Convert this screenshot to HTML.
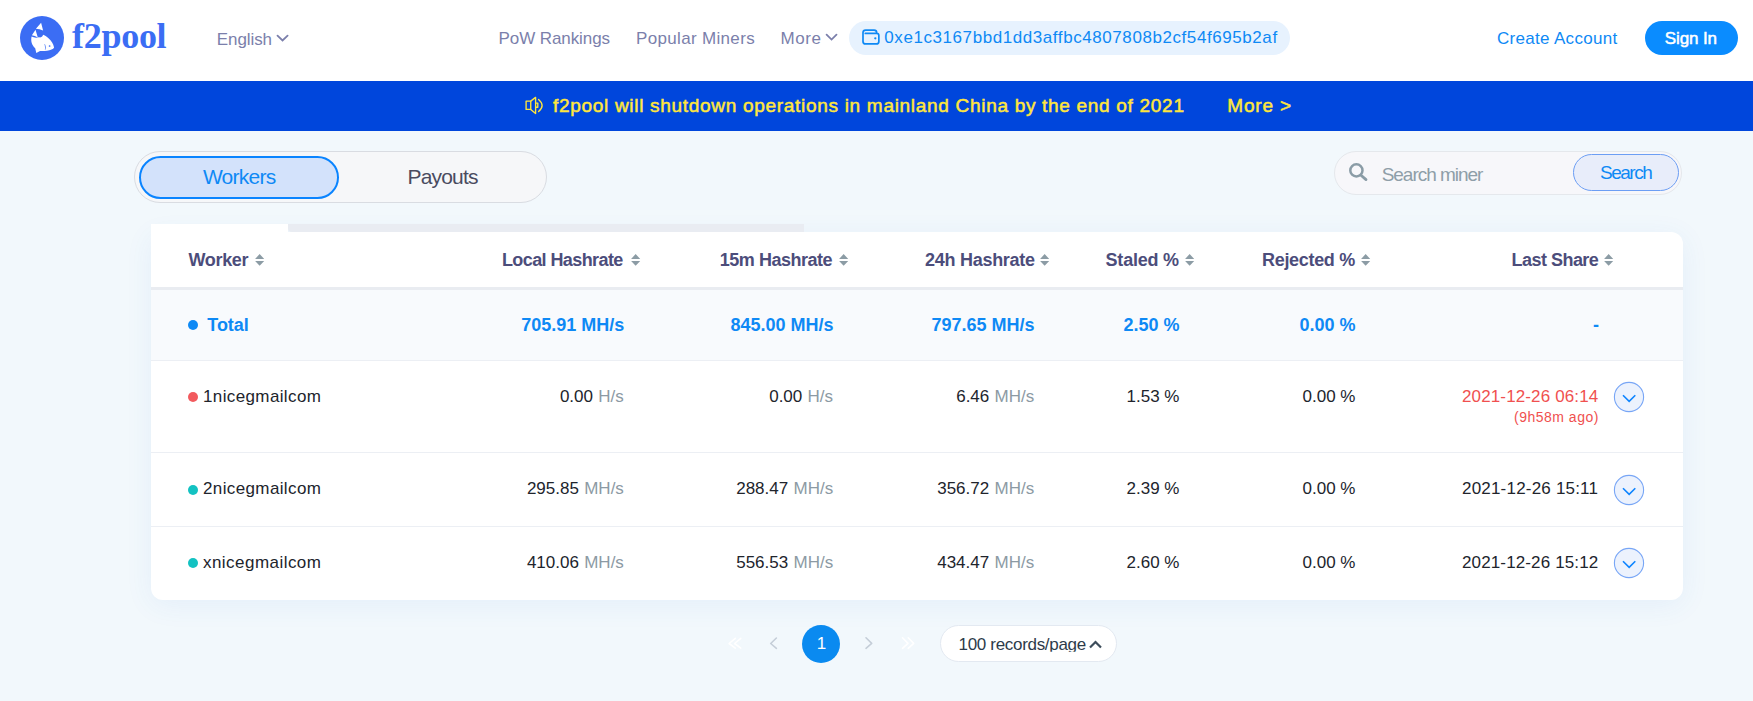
<!DOCTYPE html>
<html><head><meta charset="utf-8"><style>
html,body{margin:0;padding:0;width:1753px;height:701px;overflow:hidden;background:#F2F8FC;}
.r{position:absolute;}
.t{position:absolute;white-space:nowrap;line-height:1;}
</style></head><body>
<div class="r" style="left:0;top:0;width:1753px;height:81px;background:#fff"></div>
<div class="r" style="left:19.5px;top:16px;width:44px;height:44px;border-radius:50%;background:#3B6DF4"></div>
<svg class="r" style="left:19.5px;top:16px" width="44" height="44" viewBox="0 0 44 44">
<path fill="#fff" d="M15.9 12.7 L21.1 6.8 L23.1 14.4 Q19.5 12.8 15.9 12.7 Z"/>
<path fill="#fff" d="M11.9 19.2 L15.5 13.7 L17.8 21.5 Q14.9 19.6 11.9 19.2 Z"/>
<path fill="#fff" d="M11.6 20.6 C10.6 24.8 11.6 29.2 15.2 32.2 L16.3 37 L20 34.9 C23.5 35.3 28.5 34.6 31.5 33.4 C33.5 32.6 34.3 32 34 31.2 C33.4 28 31.4 24.6 28.5 22.2 C26.6 20.5 24.6 19.2 23.1 18.8 C22.4 20.9 20.6 21.8 19 21.3 C16.5 22 13.6 21.8 11.6 20.6 Z"/>
<circle cx="29.6" cy="30" r="0.85" fill="#3B6DF4"/>
<path fill="none" stroke="#3B6DF4" stroke-width="0.7" d="M24.6 28.3 C25.6 30 25.8 32 25.3 33.6"/>
</svg>
<div class="t" style="left:72.00px;top:18.45px;font-size:36px;font-weight:700;color:#3B6DF4;letter-spacing:-0.280px;font-family:'Liberation Serif', serif;">f2pool</div>
<div class="t" style="left:216.80px;top:30.51px;font-size:17px;font-weight:400;color:#7B7FAB;letter-spacing:-0.083px;font-family:'Liberation Sans', sans-serif;">English</div>
<svg class="r" style="left:276px;top:34px" width="13" height="9" viewBox="0 0 13 9"><path d="M1.5 1.6 L6.55 6.5 L11.6 1.6" fill="none" stroke="#7B7FAB" stroke-width="1.8" stroke-linecap="round"/></svg>
<div class="t" style="left:498.60px;top:29.61px;font-size:17px;font-weight:400;color:#7B7FAB;letter-spacing:-0.091px;font-family:'Liberation Sans', sans-serif;">PoW Rankings</div>
<div class="t" style="left:636.00px;top:29.61px;font-size:17px;font-weight:400;color:#7B7FAB;letter-spacing:0.331px;font-family:'Liberation Sans', sans-serif;">Popular Miners</div>
<div class="t" style="left:780.50px;top:29.61px;font-size:17px;font-weight:400;color:#7B7FAB;letter-spacing:0.567px;font-family:'Liberation Sans', sans-serif;">More</div>
<svg class="r" style="left:825px;top:33px" width="13" height="9" viewBox="0 0 13 9"><path d="M1.6 1.7 L6.55 6.6 L11.5 1.7" fill="none" stroke="#7B7FAB" stroke-width="1.8" stroke-linecap="round"/></svg>
<div class="r" style="left:849px;top:21px;width:441px;height:34px;border-radius:17px;background:#E7F2FE"></div>
<svg class="r" style="left:861px;top:29px" width="20" height="17" viewBox="0 0 20 17"><g fill="none" stroke="#0E89F5" stroke-width="1.7" stroke-linecap="round"><path d="M15.65 4 V3.6 Q15.65 1.05 13.1 1.05 H4.6 Q2 1.05 2 3.6 V12.4 Q2 14.95 4.6 14.95 H15.3 Q17.85 14.95 17.85 12.4 V6.6 Q17.85 4.45 15.7 4.45 H4.3"/></g><circle cx="14.3" cy="9.3" r="1.15" fill="#0E89F5"/></svg>
<div class="t" style="left:884.30px;top:29.11px;font-size:17px;font-weight:400;color:#0E89F5;letter-spacing:0.573px;font-family:'Liberation Sans', sans-serif;">0xe1c3167bbd1dd3affbc4807808b2cf54f695b2af</div>
<div class="t" style="left:1497.00px;top:29.61px;font-size:17px;font-weight:400;color:#0E89F5;letter-spacing:0.308px;font-family:'Liberation Sans', sans-serif;">Create Account</div>
<div class="r" style="left:1645px;top:21px;width:93px;height:34px;border-radius:17px;background:#0A8CFF"></div>
<div class="t" style="left:1664.80px;top:29.61px;font-size:17px;font-weight:400;color:#fff;letter-spacing:-0.133px;font-family:'Liberation Sans', sans-serif;-webkit-text-stroke:0.5px #fff">Sign In</div>
<div class="r" style="left:0;top:81px;width:1753px;height:50px;background:#0046DC"></div>
<svg class="r" style="left:520px;top:92px" width="30" height="26" viewBox="0 0 30 26"><g fill="none" stroke="#FFE63C" stroke-width="1.35" stroke-linejoin="round"><path d="M6.1 9.1 H10.75 V17.4 H6.1 Z"/><path d="M10.75 9.1 L15.6 5.4 V21.5 L10.75 17.4"/><path d="M15.6 11.1 H17.8 V15.2 H15.6"/><path d="M18.6 7.4 Q25.6 13.5 18.6 19.6" stroke-linecap="round"/></g></svg>
<div class="t" style="left:553.00px;top:95.72px;font-size:19px;font-weight:400;color:#FFE63C;letter-spacing:0.699px;font-family:'Liberation Sans', sans-serif;-webkit-text-stroke:0.5px #FFE63C">f2pool will shutdown operations in mainland China by the end of 2021</div>
<div class="t" style="left:1227.30px;top:95.72px;font-size:19px;font-weight:400;color:#FFE63C;letter-spacing:0.820px;font-family:'Liberation Sans', sans-serif;-webkit-text-stroke:0.5px #FFE63C">More &gt;</div>
<div class="r" style="left:134px;top:151px;width:413px;height:52px;border-radius:26px;background:#F6F7F9;border:1px solid #D9DCE2;box-sizing:border-box"></div>
<div class="r" style="left:139px;top:156px;width:200px;height:43px;border-radius:22px;background:#D3E2FB;border:2.5px solid #0A84FF;box-sizing:border-box"></div>
<div class="t" style="left:202.90px;top:166.22px;font-size:21px;font-weight:400;color:#0E89F5;letter-spacing:-0.750px;font-family:'Liberation Sans', sans-serif;">Workers</div>
<div class="t" style="left:407.50px;top:166.22px;font-size:21px;font-weight:400;color:#4A4B5F;letter-spacing:-0.817px;font-family:'Liberation Sans', sans-serif;">Payouts</div>
<div class="r" style="left:1334px;top:151px;width:348px;height:44px;border-radius:22px;background:#F7F7FA;border:1px solid #E5E8EC;box-sizing:border-box"></div>
<svg class="r" style="left:1348px;top:163px" width="20" height="19" viewBox="0 0 20 19"><circle cx="8.4" cy="7.4" r="6.1" fill="none" stroke="#8A9CA6" stroke-width="2.5"/><path d="M13 12.2 L18 16.6" stroke="#8A9CA6" stroke-width="2.8" stroke-linecap="round"/></svg>
<div class="t" style="left:1381.70px;top:164.52px;font-size:19px;font-weight:400;color:#8E9EA8;letter-spacing:-1.036px;font-family:'Liberation Sans', sans-serif;">Search miner</div>
<div class="r" style="left:1573px;top:154px;width:106px;height:37px;border-radius:19px;background:#E8EDFA;border:1px solid #6C9EF4;box-sizing:border-box"></div>
<div class="t" style="left:1600.00px;top:163.12px;font-size:19px;font-weight:400;color:#0E89F5;letter-spacing:-1.500px;font-family:'Liberation Sans', sans-serif;">Search</div>
<div class="r" style="left:151px;top:232px;width:1532px;height:368px;border-radius:0 12px 12px 12px;background:#fff;box-shadow:0 5px 28px rgba(60,120,220,0.075)"></div>
<div class="r" style="left:151px;top:224px;width:137px;height:8px;background:#fff"></div>
<div class="r" style="left:288px;top:224px;width:516px;height:8px;background:#E9ECF2;border-radius:0 0 0 4px"></div>
<div class="r" style="left:151px;top:287px;width:1532px;height:3px;background:#E9ECF1"></div>
<div class="r" style="left:151px;top:290px;width:1532px;height:70px;background:#F8FAFD"></div>
<div class="r" style="left:151px;top:360px;width:1532px;height:1px;background:#ECEFF4"></div>
<div class="r" style="left:151px;top:452px;width:1532px;height:1px;background:#ECEFF4"></div>
<div class="r" style="left:151px;top:526px;width:1532px;height:1px;background:#ECEFF4"></div>
<div class="t" style="left:188.50px;top:250.76px;font-size:18px;font-weight:700;color:#4C4D7B;letter-spacing:-0.340px;font-family:'Liberation Sans', sans-serif;">Worker</div>
<svg class="r" style="left:254.9px;top:253px" width="10" height="14" viewBox="0 0 10 14"><path d="M4.65 1.1 L9.2 6.1 H0.1 Z M4.65 12.8 L9.2 8.1 H0.1 Z" fill="#8C9CA5"/></svg>
<div class="t" style="left:501.90px;top:250.76px;font-size:18px;font-weight:700;color:#4C4D7B;letter-spacing:-0.585px;font-family:'Liberation Sans', sans-serif;">Local Hashrate</div>
<svg class="r" style="left:630.5px;top:253px" width="10" height="14" viewBox="0 0 10 14"><path d="M4.65 1.1 L9.2 6.1 H0.1 Z M4.65 12.8 L9.2 8.1 H0.1 Z" fill="#8C9CA5"/></svg>
<div class="t" style="left:719.80px;top:250.76px;font-size:18px;font-weight:700;color:#4C4D7B;letter-spacing:-0.482px;font-family:'Liberation Sans', sans-serif;">15m Hashrate</div>
<svg class="r" style="left:839.4px;top:253px" width="10" height="14" viewBox="0 0 10 14"><path d="M4.65 1.1 L9.2 6.1 H0.1 Z M4.65 12.8 L9.2 8.1 H0.1 Z" fill="#8C9CA5"/></svg>
<div class="t" style="left:925.00px;top:250.76px;font-size:18px;font-weight:700;color:#4C4D7B;letter-spacing:-0.273px;font-family:'Liberation Sans', sans-serif;">24h Hashrate</div>
<svg class="r" style="left:1040px;top:253px" width="10" height="14" viewBox="0 0 10 14"><path d="M4.65 1.1 L9.2 6.1 H0.1 Z M4.65 12.8 L9.2 8.1 H0.1 Z" fill="#8C9CA5"/></svg>
<div class="t" style="left:1105.60px;top:250.76px;font-size:18px;font-weight:700;color:#4C4D7B;letter-spacing:-0.229px;font-family:'Liberation Sans', sans-serif;">Staled %</div>
<svg class="r" style="left:1185.3px;top:253px" width="10" height="14" viewBox="0 0 10 14"><path d="M4.65 1.1 L9.2 6.1 H0.1 Z M4.65 12.8 L9.2 8.1 H0.1 Z" fill="#8C9CA5"/></svg>
<div class="t" style="left:1262.00px;top:250.76px;font-size:18px;font-weight:700;color:#4C4D7B;letter-spacing:-0.311px;font-family:'Liberation Sans', sans-serif;">Rejected %</div>
<svg class="r" style="left:1360.7px;top:253px" width="10" height="14" viewBox="0 0 10 14"><path d="M4.65 1.1 L9.2 6.1 H0.1 Z M4.65 12.8 L9.2 8.1 H0.1 Z" fill="#8C9CA5"/></svg>
<div class="t" style="left:1511.60px;top:250.76px;font-size:18px;font-weight:700;color:#4C4D7B;letter-spacing:-0.533px;font-family:'Liberation Sans', sans-serif;">Last Share</div>
<svg class="r" style="left:1604.3px;top:253px" width="10" height="14" viewBox="0 0 10 14"><path d="M4.65 1.1 L9.2 6.1 H0.1 Z M4.65 12.8 L9.2 8.1 H0.1 Z" fill="#8C9CA5"/></svg>
<div class="r" style="left:188px;top:320px;width:10px;height:10px;border-radius:50%;background:#0E89F5"></div>
<div class="t" style="left:207.30px;top:315.76px;font-size:18px;font-weight:700;color:#0E89F5;letter-spacing:-0.075px;font-family:'Liberation Sans', sans-serif;">Total</div>
<div class="t" style="left:521.20px;top:315.76px;font-size:18px;font-weight:700;color:#0E89F5;letter-spacing:0.000px;font-family:'Liberation Sans', sans-serif;">705.91 MH/s</div>
<div class="t" style="left:730.50px;top:315.76px;font-size:18px;font-weight:700;color:#0E89F5;letter-spacing:0.000px;font-family:'Liberation Sans', sans-serif;">845.00 MH/s</div>
<div class="t" style="left:931.50px;top:315.76px;font-size:18px;font-weight:700;color:#0E89F5;letter-spacing:0.000px;font-family:'Liberation Sans', sans-serif;">797.65 MH/s</div>
<div class="t" style="left:1123.50px;top:315.76px;font-size:18px;font-weight:700;color:#0E89F5;letter-spacing:0.000px;font-family:'Liberation Sans', sans-serif;">2.50 %</div>
<div class="t" style="left:1299.50px;top:315.76px;font-size:18px;font-weight:700;color:#0E89F5;letter-spacing:0.000px;font-family:'Liberation Sans', sans-serif;">0.00 %</div>
<div class="t" style="left:1593.00px;top:315.76px;font-size:18px;font-weight:700;color:#0E89F5;letter-spacing:0.000px;font-family:'Liberation Sans', sans-serif;">-</div>
<div class="r" style="left:188px;top:392px;width:10px;height:10px;border-radius:50%;background:#F25A5E"></div>
<div class="t" style="left:203.00px;top:387.61px;font-size:17px;font-weight:400;color:#21242C;letter-spacing:0.375px;font-family:'Liberation Sans', sans-serif;">1nicegmailcom</div>
<div class="t" style="left:598.20px;top:387.61px;font-size:17px;font-weight:400;color:#8C9AA4;letter-spacing:0.000px;font-family:'Liberation Sans', sans-serif;">H/s</div>
<div class="t" style="left:559.90px;top:387.61px;font-size:17px;font-weight:400;color:#21242C;letter-spacing:0.000px;font-family:'Liberation Sans', sans-serif;">0.00</div>
<div class="t" style="left:807.50px;top:387.61px;font-size:17px;font-weight:400;color:#8C9AA4;letter-spacing:0.000px;font-family:'Liberation Sans', sans-serif;">H/s</div>
<div class="t" style="left:769.20px;top:387.61px;font-size:17px;font-weight:400;color:#21242C;letter-spacing:0.000px;font-family:'Liberation Sans', sans-serif;">0.00</div>
<div class="t" style="left:994.50px;top:387.61px;font-size:17px;font-weight:400;color:#8C9AA4;letter-spacing:0.000px;font-family:'Liberation Sans', sans-serif;">MH/s</div>
<div class="t" style="left:956.20px;top:387.61px;font-size:17px;font-weight:400;color:#21242C;letter-spacing:0.000px;font-family:'Liberation Sans', sans-serif;">6.46</div>
<div class="t" style="left:1126.50px;top:387.61px;font-size:17px;font-weight:400;color:#21242C;letter-spacing:0.000px;font-family:'Liberation Sans', sans-serif;">1.53 %</div>
<div class="t" style="left:1302.50px;top:387.61px;font-size:17px;font-weight:400;color:#21242C;letter-spacing:0.000px;font-family:'Liberation Sans', sans-serif;">0.00 %</div>
<div class="t" style="left:1462.00px;top:387.61px;font-size:17px;font-weight:400;color:#F0504F;letter-spacing:0.133px;font-family:'Liberation Sans', sans-serif;">2021-12-26 06:14</div>
<div class="t" style="left:1514.00px;top:409.65px;font-size:14px;font-weight:400;color:#F0504F;letter-spacing:0.500px;font-family:'Liberation Sans', sans-serif;">(9h58m ago)</div>
<svg class="r" style="left:1613px;top:381px" width="32" height="32" viewBox="0 0 32 32"><circle cx="16" cy="16" r="14.6" fill="#ECF2FD" stroke="#78A6F6" stroke-width="1.1"/><path d="M10 14.2 L16.15 20.4 L22.3 14.2" fill="none" stroke="#0D84FF" stroke-width="1.6"/></svg>
<div class="r" style="left:188px;top:485px;width:10px;height:10px;border-radius:50%;background:#13C2C2"></div>
<div class="t" style="left:203.00px;top:479.61px;font-size:17px;font-weight:400;color:#21242C;letter-spacing:0.375px;font-family:'Liberation Sans', sans-serif;">2nicegmailcom</div>
<div class="t" style="left:584.20px;top:479.61px;font-size:17px;font-weight:400;color:#8C9AA4;letter-spacing:0.000px;font-family:'Liberation Sans', sans-serif;">MH/s</div>
<div class="t" style="left:526.90px;top:479.61px;font-size:17px;font-weight:400;color:#21242C;letter-spacing:0.000px;font-family:'Liberation Sans', sans-serif;">295.85</div>
<div class="t" style="left:793.50px;top:479.61px;font-size:17px;font-weight:400;color:#8C9AA4;letter-spacing:0.000px;font-family:'Liberation Sans', sans-serif;">MH/s</div>
<div class="t" style="left:736.20px;top:479.61px;font-size:17px;font-weight:400;color:#21242C;letter-spacing:0.000px;font-family:'Liberation Sans', sans-serif;">288.47</div>
<div class="t" style="left:994.50px;top:479.61px;font-size:17px;font-weight:400;color:#8C9AA4;letter-spacing:0.000px;font-family:'Liberation Sans', sans-serif;">MH/s</div>
<div class="t" style="left:937.20px;top:479.61px;font-size:17px;font-weight:400;color:#21242C;letter-spacing:0.000px;font-family:'Liberation Sans', sans-serif;">356.72</div>
<div class="t" style="left:1126.50px;top:479.61px;font-size:17px;font-weight:400;color:#21242C;letter-spacing:0.000px;font-family:'Liberation Sans', sans-serif;">2.39 %</div>
<div class="t" style="left:1302.50px;top:479.61px;font-size:17px;font-weight:400;color:#21242C;letter-spacing:0.000px;font-family:'Liberation Sans', sans-serif;">0.00 %</div>
<div class="t" style="left:1462.00px;top:479.61px;font-size:17px;font-weight:400;color:#21242C;letter-spacing:0.200px;font-family:'Liberation Sans', sans-serif;">2021-12-26 15:11</div>
<svg class="r" style="left:1613px;top:474px" width="32" height="32" viewBox="0 0 32 32"><circle cx="16" cy="16" r="14.6" fill="#ECF2FD" stroke="#78A6F6" stroke-width="1.1"/><path d="M10 14.2 L16.15 20.4 L22.3 14.2" fill="none" stroke="#0D84FF" stroke-width="1.6"/></svg>
<div class="r" style="left:188px;top:558px;width:10px;height:10px;border-radius:50%;background:#13C2C2"></div>
<div class="t" style="left:203.00px;top:553.61px;font-size:17px;font-weight:400;color:#21242C;letter-spacing:0.458px;font-family:'Liberation Sans', sans-serif;">xnicegmailcom</div>
<div class="t" style="left:584.20px;top:553.61px;font-size:17px;font-weight:400;color:#8C9AA4;letter-spacing:0.000px;font-family:'Liberation Sans', sans-serif;">MH/s</div>
<div class="t" style="left:526.90px;top:553.61px;font-size:17px;font-weight:400;color:#21242C;letter-spacing:0.000px;font-family:'Liberation Sans', sans-serif;">410.06</div>
<div class="t" style="left:793.50px;top:553.61px;font-size:17px;font-weight:400;color:#8C9AA4;letter-spacing:0.000px;font-family:'Liberation Sans', sans-serif;">MH/s</div>
<div class="t" style="left:736.20px;top:553.61px;font-size:17px;font-weight:400;color:#21242C;letter-spacing:0.000px;font-family:'Liberation Sans', sans-serif;">556.53</div>
<div class="t" style="left:994.50px;top:553.61px;font-size:17px;font-weight:400;color:#8C9AA4;letter-spacing:0.000px;font-family:'Liberation Sans', sans-serif;">MH/s</div>
<div class="t" style="left:937.20px;top:553.61px;font-size:17px;font-weight:400;color:#21242C;letter-spacing:0.000px;font-family:'Liberation Sans', sans-serif;">434.47</div>
<div class="t" style="left:1126.50px;top:553.61px;font-size:17px;font-weight:400;color:#21242C;letter-spacing:0.000px;font-family:'Liberation Sans', sans-serif;">2.60 %</div>
<div class="t" style="left:1302.50px;top:553.61px;font-size:17px;font-weight:400;color:#21242C;letter-spacing:0.000px;font-family:'Liberation Sans', sans-serif;">0.00 %</div>
<div class="t" style="left:1462.00px;top:553.61px;font-size:17px;font-weight:400;color:#21242C;letter-spacing:0.133px;font-family:'Liberation Sans', sans-serif;">2021-12-26 15:12</div>
<svg class="r" style="left:1613px;top:547px" width="32" height="32" viewBox="0 0 32 32"><circle cx="16" cy="16" r="14.6" fill="#ECF2FD" stroke="#78A6F6" stroke-width="1.1"/><path d="M10 14.2 L16.15 20.4 L22.3 14.2" fill="none" stroke="#0D84FF" stroke-width="1.6"/></svg>
<svg class="r" style="left:720px;top:628px" width="200" height="32" viewBox="0 0 200 32"><g fill="none" stroke-width="1.6" stroke-linecap="round" stroke-linejoin="round"><path d="M15.3 10.3 L9.1 15.5 L15.3 20.1 M20.8 10.3 L14.6 15.5 L20.8 20.1" stroke="#FFFFFF"/><path d="M56.4 10 L50.7 15.5 L56.4 20.3" stroke="#C5CED8"/><path d="M146 9.8 L151.7 15.4 L146 20.3" stroke="#C5CED8"/><path d="M182.5 9.8 L188 15.4 L182.5 20.3 M188.2 9.8 L193.7 15.4 L188.2 20.3" stroke="#FFFFFF"/></g></svg>
<div class="r" style="left:802px;top:625px;width:38px;height:38px;border-radius:50%;background:#0A8AF0"></div>
<div class="t" style="left:816.80px;top:634.91px;font-size:17px;font-weight:400;color:#fff;letter-spacing:0.000px;font-family:'Liberation Sans', sans-serif;">1</div>
<div class="r" style="left:940px;top:625px;width:177px;height:37px;border-radius:19px;background:#fff;border:1px solid #E3E9F1;box-sizing:border-box"></div>
<div class="t" style="left:958.50px;top:635.61px;font-size:17px;font-weight:400;color:#2D3B4A;letter-spacing:-0.313px;font-family:'Liberation Sans', sans-serif;clip-path:inset(-4px -4px 0.8px -4px)">100 records/page</div>
<svg class="r" style="left:1088px;top:638px" width="15" height="12" viewBox="0 0 15 12"><path d="M2 9.5 L7.5 4 L13 9.5" fill="none" stroke="#3D4D5B" stroke-width="2.2"/></svg>
</body></html>
